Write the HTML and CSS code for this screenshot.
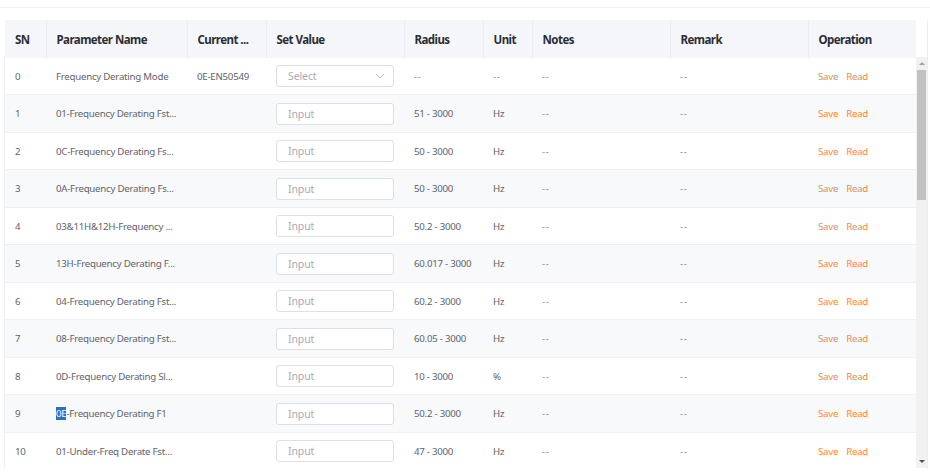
FILE: index.html
```html
<!DOCTYPE html>
<html>
<head>
<meta charset="utf-8">
<link rel="stylesheet" href="styles.css">
</head>
<body>
<div class="topbar"></div>
<div class="panel">
  <div class="head">
    <table class="grid">
      <colgroup><col class="c1"><col class="c2"><col class="c3"><col class="c4"><col class="c5"><col class="c6"><col class="c7"><col class="c8"><col class="c9"></colgroup>
      <tr><th>SN</th><th>Parameter Name</th><th>Current ...</th><th>Set Value</th><th>Radius</th><th>Unit</th><th>Notes</th><th>Remark</th><th>Operation</th></tr>
    </table>
    <div class="gutter"></div>
  </div>
  <div class="body">
    <div class="rows">
      <table class="grid">
        <colgroup><col class="c1"><col class="c2"><col class="c3"><col class="c4"><col class="c5"><col class="c6"><col class="c7"><col class="c8"><col class="c9"></colgroup>
        <tr><td>0</td><td>Frequency Derating Mode</td><td>0E-EN50549</td><td><div class="field sel"><span>Select</span><svg width="10" height="6" viewBox="0 0 10 6"><path d="M1 1 L5 5 L9 1" fill="none" stroke="#b4b7bd" stroke-width="1"/></svg></div></td><td class="na">--</td><td class="na">--</td><td class="na">--</td><td class="na">--</td><td><span class="op">Save</span><span class="op">Read</span></td></tr>
        <tr><td>1</td><td>01-Frequency Derating Fst...</td><td></td><td><div class="field">Input</div></td><td>51 - 3000</td><td>Hz</td><td class="na">--</td><td class="na">--</td><td><span class="op">Save</span><span class="op">Read</span></td></tr>
        <tr><td>2</td><td>0C-Frequency Derating Fs...</td><td></td><td><div class="field">Input</div></td><td>50 - 3000</td><td>Hz</td><td class="na">--</td><td class="na">--</td><td><span class="op">Save</span><span class="op">Read</span></td></tr>
        <tr><td>3</td><td>0A-Frequency Derating Fs...</td><td></td><td><div class="field">Input</div></td><td>50 - 3000</td><td>Hz</td><td class="na">--</td><td class="na">--</td><td><span class="op">Save</span><span class="op">Read</span></td></tr>
        <tr><td>4</td><td>03&amp;11H&amp;12H-Frequency ...</td><td></td><td><div class="field">Input</div></td><td>50.2 - 3000</td><td>Hz</td><td class="na">--</td><td class="na">--</td><td><span class="op">Save</span><span class="op">Read</span></td></tr>
        <tr><td>5</td><td>13H-Frequency Derating F...</td><td></td><td><div class="field">Input</div></td><td>60.017 - 3000</td><td>Hz</td><td class="na">--</td><td class="na">--</td><td><span class="op">Save</span><span class="op">Read</span></td></tr>
        <tr><td>6</td><td>04-Frequency Derating Fst...</td><td></td><td><div class="field">Input</div></td><td>60.2 - 3000</td><td>Hz</td><td class="na">--</td><td class="na">--</td><td><span class="op">Save</span><span class="op">Read</span></td></tr>
        <tr><td>7</td><td>08-Frequency Derating Fst...</td><td></td><td><div class="field">Input</div></td><td>60.05 - 3000</td><td>Hz</td><td class="na">--</td><td class="na">--</td><td><span class="op">Save</span><span class="op">Read</span></td></tr>
        <tr><td>8</td><td>0D-Frequency Derating Sl...</td><td></td><td><div class="field">Input</div></td><td>10 - 3000</td><td>%</td><td class="na">--</td><td class="na">--</td><td><span class="op">Save</span><span class="op">Read</span></td></tr>
        <tr><td>9</td><td><span class="hl">0E</span>-Frequency Derating F1</td><td></td><td><div class="field">Input</div></td><td>50.2 - 3000</td><td>Hz</td><td class="na">--</td><td class="na">--</td><td><span class="op">Save</span><span class="op">Read</span></td></tr>
        <tr><td>10</td><td>01-Under-Freq Derate Fst...</td><td></td><td><div class="field">Input</div></td><td>47 - 3000</td><td>Hz</td><td class="na">--</td><td class="na">--</td><td><span class="op">Save</span><span class="op">Read</span></td></tr>
      </table>
    </div>
    <div class="scrollbar">
      <div class="arrow up"></div>
      <div class="thumb"></div>
      <div class="spacer"></div>
      <div class="arrow down"></div>
    </div>
  </div>
</div>
</body>
</html>
```
FILE: styles.css
```css
html, body {
  margin: 0;
  padding: 0;
  background: #fff;
  font-family: "Noto Sans", "Open Sans", sans-serif;
}
.topbar {
  height: 7px;
  border-bottom: 1px solid #f0f1f3;
  margin-bottom: 12px;
}
.panel {
  margin-left: 5px;
  width: 923px;
  height: 449px;
  display: flex;
  flex-direction: column;
  border-right: 1px solid #eceef2;
  box-sizing: border-box;
}
.head {
  display: flex;
  height: 37px;
  flex: none;
}
.gutter {
  width: 11px;
  background: #fff;
}
.grid {
  width: 911px;
  border-collapse: collapse;
  table-layout: fixed;
  flex: none;
}
.c1 { width: 41px; }
.c2 { width: 141px; }
.c3 { width: 79px; }
.c4 { width: 138px; }
.c5 { width: 79px; }
.c6 { width: 49px; }
.c7 { width: 138px; }
.c8 { width: 138px; }
.c9 { width: 108px; }
th {
  height: 37px;
  background: #f5f6fa;
  color: #2b2e33;
  font-size: 11.5px;
  letter-spacing: -0.55px;
  font-weight: 700;
  text-align: left;
  padding: 1px 0 0 10px;
  border-left: 1px solid #ebedf2;
  white-space: nowrap;
  overflow: hidden;
}
th:first-child { border-left: none; }
.body {
  display: flex;
  height: 411px;
  flex: none;
  overflow: hidden;
  border-left: 1px solid #eceef2;
  margin-left: -1px;
}
.rows {
  width: 911px;
  height: 411px;
  overflow: hidden;
  flex: none;
}
td {
  height: 37.5px;
  padding: 1px 0 0 10px;
  color: #5f6368;
  font-size: 9.7px;
  letter-spacing: -0.25px;
  border-bottom: 1px solid #eef0f4;
  white-space: nowrap;
  overflow: hidden;
  box-sizing: border-box;
}
td.na {
  letter-spacing: 0.6px;
  color: #8a8e94;
}
tr:nth-child(even) td { background: #f8f9fb; }
.field {
  width: 118px;
  height: 22px;
  box-sizing: border-box;
  border: 1px solid #dcdfe6;
  border-radius: 3px;
  background: #fff;
  color: #a8abb2;
  font-size: 10.5px;
  letter-spacing: -0.1px;
  padding-left: 11px;
  display: flex;
  align-items: center;
  justify-content: space-between;
  padding-right: 8px;
}
.op {
  color: #f7893b;
  margin-right: 8px;
}
.hl {
  background: #2f6bd4;
  color: #fff;
}
.scrollbar {
  width: 11px;
  background: #f1f1f1;
  display: flex;
  flex-direction: column;
  align-items: center;
}
.arrow {
  width: 0;
  height: 0;
  border-left: 3px solid transparent;
  border-right: 3px solid transparent;
  margin: 5px 0;
}
.arrow.up { border-bottom: 3px solid #a3a3a3; }
.arrow.down { border-top: 3px solid #505050; }
.thumb {
  width: 9px;
  height: 130px;
  background: #c1c1c1;
}
.spacer { flex: 1; }
```
